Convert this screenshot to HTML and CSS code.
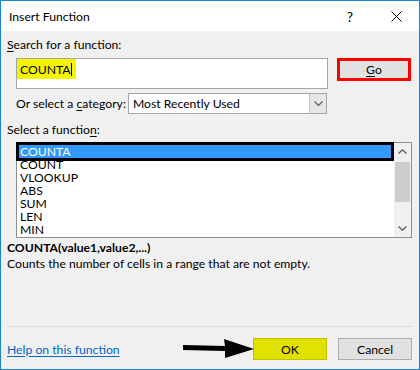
FILE: index.html
```html
<!DOCTYPE html>
<html lang="en">

<head>
    <meta charset="UTF-8">
    <title>Insert Function</title>
    <link rel="stylesheet" href="styles.css">
</head>

<body>
    <div class="dialog">
        <div class="titlebar">
            <span class="title">Insert Function</span>
            <span class="cap-btn help">?</span>
            <span class="cap-btn">
                <svg width="11" height="11" viewBox="0 0 11 11">
                    <path d="M0.5 0.5 L10.5 10.5 M10.5 0.5 L0.5 10.5" stroke="#000" stroke-width="1" fill="none" />
                </svg>
            </span>
        </div>

        <div class="content">
            <div class="label"><u>S</u>earch for a function:</div>
            <div class="search-row">
                <div class="search-box"><span class="hl">COUNTA<span class="caret"></span></span></div>
                <button class="btn go"><u>G</u>o</button>
            </div>

            <div class="category-row">
                <span class="category-label">Or select a <u>c</u>ategory:</span>
                <div class="select">
                    <span class="select-value">Most Recently Used</span>
                    <span class="select-drop">
                        <svg width="9" height="5" viewBox="0 0 9 5">
                            <path d="M0.5 0.5 L4.5 4.5 L8.5 0.5" stroke="#606060" stroke-width="1.2" fill="none" />
                        </svg>
                    </span>
                </div>
            </div>

            <div class="label list-label">Select a functio<u>n</u>:</div>
            <div class="list">
                <ul class="items">
                    <li class="selected">COUNTA</li>
                    <li>COUNT</li>
                    <li>VLOOKUP</li>
                    <li>ABS</li>
                    <li>SUM</li>
                    <li>LEN</li>
                    <li>MIN</li>
                </ul>
                <div class="scrollbar">
                    <span class="arrow">
                        <svg width="9" height="5" viewBox="0 0 9 5">
                            <path d="M0.5 4.5 L4.5 0.8 L8.5 4.5" stroke="#606060" stroke-width="1.4" fill="none" />
                        </svg>
                    </span>
                    <span class="thumb"></span>
                    <span class="arrow down">
                        <svg width="9" height="5" viewBox="0 0 9 5">
                            <path d="M0.5 0.5 L4.5 4.2 L8.5 0.5" stroke="#606060" stroke-width="1.4" fill="none" />
                        </svg>
                    </span>
                </div>
            </div>

            <div class="signature">COUNTA(value1,value2,...)</div>
            <div class="desc">Counts the number of cells in a range that are not empty.</div>
        </div>

        <div class="footer">
            <div class="separator"></div>
            <div class="footer-row">
                <a href="#" class="help-link">Help on this function</a>
                <!-- arrow drawn on top of the screenshot -->
                <svg class="pointer" width="80" height="26" viewBox="0 0 80 26">
                    <polygon points="2,8 44,9 43,2 73,12 44,21 44,14 2,13" fill="#000" />
                </svg>
                <button class="btn ok">OK</button>
                <button class="btn cancel">Cancel</button>
            </div>
        </div>
    </div>
</body>

</html>
```

FILE: styles.css
```css
body {
    margin: 0;
    font-family: Lato, "Noto Sans", sans-serif;
    font-size: 12.2px;
    color: #000;
}

u {
    text-decoration-thickness: 1px;
    text-underline-offset: 2px;
}

.dialog {
    width: 420px;
    height: 370px;
    box-sizing: border-box;
    border: 1px solid #1883d7;
    display: flex;
    flex-direction: column;
    background-color: #f0f0f0;
    position: relative;
}

.titlebar {
    height: 30px;
    flex: none;
    background-color: #fff;
    display: flex;
    align-items: center;
}

.title {
    padding-left: 8px;
    flex: 1;
}

.cap-btn {
    width: 46px;
    height: 30px;
    display: flex;
    align-items: center;
    justify-content: center;
}

.help {
    font-size: 14px;
}

.content {
    flex: 1;
    padding: 0 6px;
}

.label {
    margin-top: 6px;
    line-height: 16px;
}

.search-row {
    margin: 5px 0 0 9px;
    display: flex;
    align-items: flex-start;
}

.search-box {
    width: 312px;
    height: 31px;
    box-sizing: border-box;
    border: 1px solid #a6a6a6;
    background-color: #fff;
}

.hl {
    display: inline-flex;
    align-items: center;
    width: 59px;
    height: 20px;
    padding-left: 3px;
    box-sizing: border-box;
    background-color: #f4f400;
}

.caret {
    display: inline-block;
    width: 1px;
    height: 13px;
    background-color: #000;
}

.btn {
    font: inherit;
    color: #000;
    box-sizing: border-box;
    background-color: #e1e1e1;
    border: 1px solid #adadad;
    padding: 0;
}

.go {
    width: 74px;
    height: 23px;
    margin-left: 9px;
    border: 3px solid #f00;
}

.category-row {
    margin: 4px 0 0 9px;
    width: 311px;
    display: flex;
    align-items: center;
}

.category-label {
    flex: none;
    margin-right: 2px;
    white-space: nowrap;
}

.select {
    flex: 1;
    height: 21px;
    box-sizing: border-box;
    border: 1px solid #a6a6a6;
    background-color: #fff;
    display: flex;
}

.select-value {
    flex: 1;
    padding-left: 4px;
    line-height: 19px;
}

.select-drop {
    width: 16px;
    background-color: #e6e6e6;
    border-left: 1px solid #c4c4c4;
    display: flex;
    align-items: center;
    justify-content: center;
}

.list-label {
    margin-top: 8px;
}

.list {
    margin: 4px 0 0 9px;
    width: 396px;
    height: 96px;
    box-sizing: border-box;
    border: 1px solid #8f8f8f;
    background-color: #fff;
    display: flex;
}

.items {
    flex: 1;
    list-style: none;
    margin: 0;
    padding: 2px 0 0;
}

.items li {
    height: 13px;
    line-height: 13px;
    padding-left: 3px;
}

.items li.selected {
    margin: 0 3px 0 2px;
    padding-left: 1px;
    background-color: #3399ff;
    color: #fff;
    box-shadow: 0 0 0 3px #000;
}

.scrollbar {
    width: 17px;
    background-color: #f0f0f0;
    display: flex;
    flex-direction: column;
    align-items: center;
}

.arrow {
    height: 17px;
    width: 17px;
    display: flex;
    align-items: center;
    justify-content: center;
}

.thumb {
    width: 15px;
    height: 40px;
    margin-top: 2px;
    background-color: #cdcdcd;
}

.down {
    margin-top: auto;
}

.signature {
    margin-top: 2px;
    line-height: 16px;
    font-weight: bold;
}

.desc {
    line-height: 16px;
}

.footer {
    height: 43px;
    flex: none;
}

.separator {
    height: 1px;
    margin: 0 6px;
    background-color: #dcdcdc;
}

.footer-row {
    display: flex;
    align-items: center;
    padding: 11px 7px 0 6px;
}

.help-link {
    color: #0066cc;
    text-underline-offset: 2px;
    margin-right: auto;
}

.pointer {
    position: absolute;
    left: 180px;
    top: 336px;
}

.ok,
.cancel {
    width: 74px;
    height: 22px;
}

.ok {
    background-color: #e1e100;
    border-color: #c1c100;
    margin-right: 11px;
}
```
